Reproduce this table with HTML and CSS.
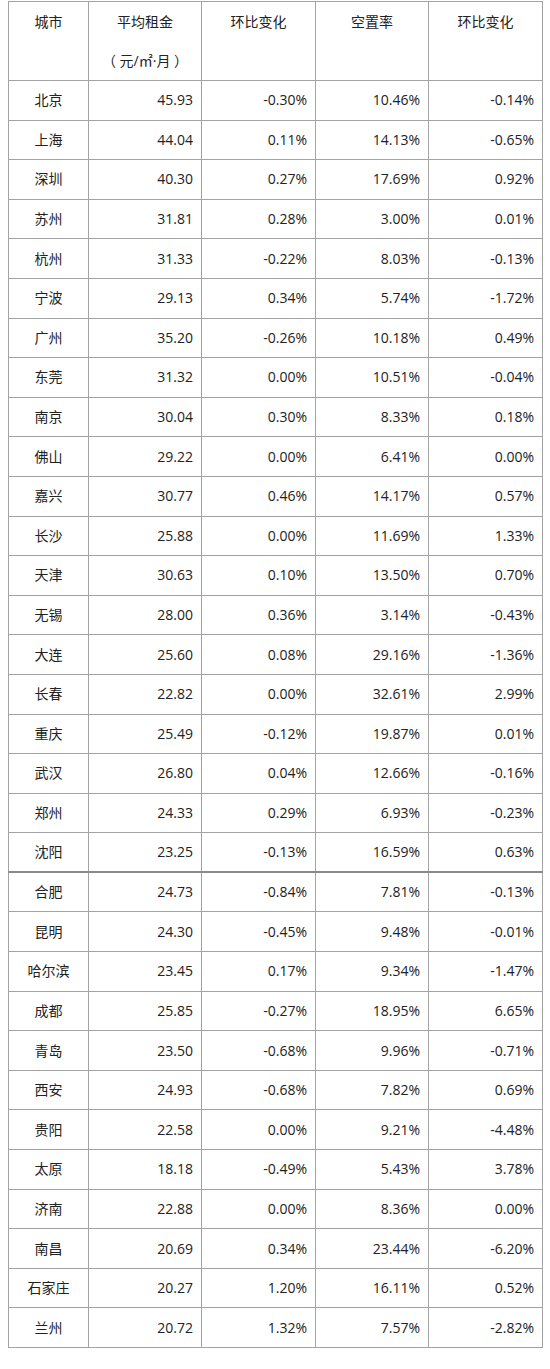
FILE: index.html
```html
<!DOCTYPE html>
<html lang="zh-CN">
<head>
<meta charset="utf-8">
<link rel="stylesheet" href="styles.css">
</head>
<body>
<table class="rent">
  <colgroup>
    <col class="c1"><col class="c2"><col class="c3"><col class="c4"><col class="c5">
  </colgroup>
  <thead>
    <tr class="head">
      <th>城市</th>
      <th><div class="hl">平均租金</div><div class="hl">（ 元/㎡·月 ）</div></th>
      <th>环比变化</th>
      <th>空置率</th>
      <th>环比变化</th>
    </tr>
  </thead>
  <tbody>
    <tr><td>北京</td><td>45.93</td><td>-0.30%</td><td>10.46%</td><td>-0.14%</td></tr>
    <tr><td>上海</td><td>44.04</td><td>0.11%</td><td>14.13%</td><td>-0.65%</td></tr>
    <tr><td>深圳</td><td>40.30</td><td>0.27%</td><td>17.69%</td><td>0.92%</td></tr>
    <tr><td>苏州</td><td>31.81</td><td>0.28%</td><td>3.00%</td><td>0.01%</td></tr>
    <tr><td>杭州</td><td>31.33</td><td>-0.22%</td><td>8.03%</td><td>-0.13%</td></tr>
    <tr><td>宁波</td><td>29.13</td><td>0.34%</td><td>5.74%</td><td>-1.72%</td></tr>
    <tr><td>广州</td><td>35.20</td><td>-0.26%</td><td>10.18%</td><td>0.49%</td></tr>
    <tr><td>东莞</td><td>31.32</td><td>0.00%</td><td>10.51%</td><td>-0.04%</td></tr>
    <tr><td>南京</td><td>30.04</td><td>0.30%</td><td>8.33%</td><td>0.18%</td></tr>
    <tr><td>佛山</td><td>29.22</td><td>0.00%</td><td>6.41%</td><td>0.00%</td></tr>
    <tr><td>嘉兴</td><td>30.77</td><td>0.46%</td><td>14.17%</td><td>0.57%</td></tr>
    <tr><td>长沙</td><td>25.88</td><td>0.00%</td><td>11.69%</td><td>1.33%</td></tr>
    <tr><td>天津</td><td>30.63</td><td>0.10%</td><td>13.50%</td><td>0.70%</td></tr>
    <tr><td>无锡</td><td>28.00</td><td>0.36%</td><td>3.14%</td><td>-0.43%</td></tr>
    <tr><td>大连</td><td>25.60</td><td>0.08%</td><td>29.16%</td><td>-1.36%</td></tr>
    <tr><td>长春</td><td>22.82</td><td>0.00%</td><td>32.61%</td><td>2.99%</td></tr>
    <tr><td>重庆</td><td>25.49</td><td>-0.12%</td><td>19.87%</td><td>0.01%</td></tr>
    <tr><td>武汉</td><td>26.80</td><td>0.04%</td><td>12.66%</td><td>-0.16%</td></tr>
    <tr><td>郑州</td><td>24.33</td><td>0.29%</td><td>6.93%</td><td>-0.23%</td></tr>
    <tr><td>沈阳</td><td>23.25</td><td>-0.13%</td><td>16.59%</td><td>0.63%</td></tr>
    <tr class="split"><td>合肥</td><td>24.73</td><td>-0.84%</td><td>7.81%</td><td>-0.13%</td></tr>
    <tr><td>昆明</td><td>24.30</td><td>-0.45%</td><td>9.48%</td><td>-0.01%</td></tr>
    <tr><td>哈尔滨</td><td>23.45</td><td>0.17%</td><td>9.34%</td><td>-1.47%</td></tr>
    <tr><td>成都</td><td>25.85</td><td>-0.27%</td><td>18.95%</td><td>6.65%</td></tr>
    <tr><td>青岛</td><td>23.50</td><td>-0.68%</td><td>9.96%</td><td>-0.71%</td></tr>
    <tr><td>西安</td><td>24.93</td><td>-0.68%</td><td>7.82%</td><td>0.69%</td></tr>
    <tr><td>贵阳</td><td>22.58</td><td>0.00%</td><td>9.21%</td><td>-4.48%</td></tr>
    <tr><td>太原</td><td>18.18</td><td>-0.49%</td><td>5.43%</td><td>3.78%</td></tr>
    <tr><td>济南</td><td>22.88</td><td>0.00%</td><td>8.36%</td><td>0.00%</td></tr>
    <tr><td>南昌</td><td>20.69</td><td>0.34%</td><td>23.44%</td><td>-6.20%</td></tr>
    <tr><td>石家庄</td><td>20.27</td><td>1.20%</td><td>16.11%</td><td>0.52%</td></tr>
    <tr><td>兰州</td><td>20.72</td><td>1.32%</td><td>7.57%</td><td>-2.82%</td></tr>
  </tbody>
</table>
</body>
</html>
```

FILE: styles.css
```css
html, body {
  margin: 0;
  padding: 0;
  background: #ffffff;
}
body {
  padding: 1px 0 0 8px;
  font-family: "Open Sans", "Noto Sans CJK SC", sans-serif;
  font-size: 14px;
  color: #222222;
}
.rent {
  border-collapse: collapse;
  table-layout: fixed;
  width: 534px;
}
.c1 { width: 80px; }
.c2 { width: 113px; }
.c3 { width: 114px; }
.c4 { width: 113px; }
.c5 { width: 114px; }
.rent th, .rent td {
  border: 1px solid #a3a3a3;
  padding: 0 8px;
}
.rent th {
  font-weight: normal;
  vertical-align: top;
  text-align: center;
  line-height: 39px;
  padding-top: 0;
}
.head { height: 78px; }
.rent tbody tr { height: 39.6px; }
.rent td {
  text-align: right;
  vertical-align: middle;
  line-height: 20px;
}
.rent td:first-child {
  text-align: center;
}
.rent tr.split td {
  border-top: 2px solid #8a8a8a;
}
.hl { white-space: nowrap; }
```
